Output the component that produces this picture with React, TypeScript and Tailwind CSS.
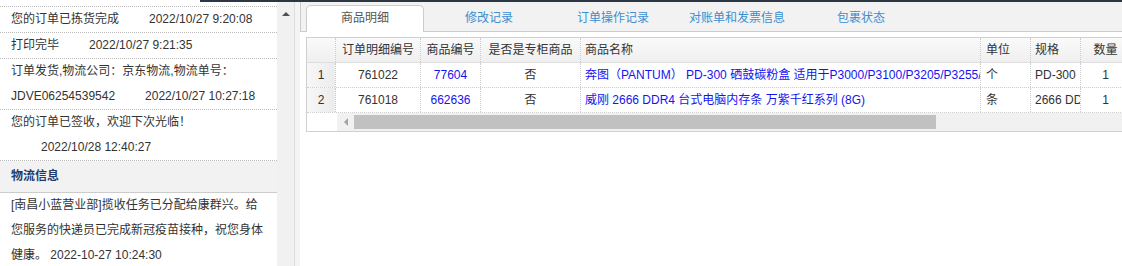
import React from "react";

const font = { fontFamily: '"Liberation Sans", "Noto Sans CJK SC", sans-serif' };

const logs = [
  { text: "您的订单已拣货完成", time: "2022/10/27 9:20:08" },
  { text: "打印完毕", time: "2022/10/27 9:21:35" },
  { text: "订单发货,物流公司：京东物流,物流单号：JDVE06254539542", time: "2022/10/27 10:27:18" },
  { text: "您的订单已签收，欢迎下次光临！", time: "2022/10/28 12:40:27" },
];

const tabs = ["商品明细", "修改记录", "订单操作记录", "对账单和发票信息", "包裹状态"];

const rows = [
  {
    id: "761022",
    sku: "77604",
    name: "奔图（PANTUM） PD-300 硒鼓碳粉盒 适用于P3000/P3100/P3205/P3255/P3500/P3405DN",
    unit: "个",
    spec: "PD-300",
    qty: "1",
  },
  {
    id: "761018",
    sku: "662636",
    name: "威刚 2666 DDR4 台式电脑内存条 万紫千红系列 (8G)",
    unit: "条",
    spec: "2666 DDR4",
    qty: "1",
  },
];

const cols = "grid grid-cols-[29px_85px_60px_100px_400px_50px_50px_50px]";
const cell = "border-r border-dotted border-[#ccc] overflow-hidden whitespace-nowrap";

export default function App() {
  return (
    <div className="w-[1122px] h-[266px] overflow-hidden bg-white text-[12px] text-[#333] flex flex-col" style={font}>
      {/* top band */}
      <div className="flex h-[2px] shrink-0">
        <div className="w-[200px] bg-white" />
        <div className="flex-1 bg-[#2d3744]" />
      </div>

      <div className="flex flex-1 min-h-0">
        {/* Left log panel */}
        <div className="w-[277px] shrink-0 pt-[4px] overflow-hidden">
          <div className="border-t border-dotted border-[#bbb]">
            {logs.map((l, i) => (
              <div key={i} className="pl-[11px] pr-[10px] leading-[25px] border-b border-dotted border-[#bbb]">
                {l.text}
                <span className="ml-[30px]">{l.time}</span>
              </div>
            ))}
          </div>
          <div className="h-[32px] bg-[#f2f2f2] border-b border-[#ccc] pl-[11px] leading-[31px] font-bold text-[#1e3a6e]">
            物流信息
          </div>
          <div className="pl-[11px] pr-[10px] leading-[25px]">
            [南昌小蓝营业部]揽收任务已分配给康群兴。给您服务的快递员已完成新冠疫苗接种，祝您身体健康。 2022-10-27 10:24:30
          </div>
        </div>

        {/* Left scrollbar */}
        <div className="w-[17px] shrink-0 bg-[#f1f1f1] flex justify-center pt-[9px]">
          <svg width="8" height="5" viewBox="0 0 8 5">
            <path d="M0 5 L4 1 L8 5 Z" fill="#505050" />
          </svg>
        </div>
        <div className="w-[6px] shrink-0 bg-[#f4f4f4] border-l border-[#dcdcdc]" />

        {/* Right panel */}
        <div className="flex-1 min-w-0 overflow-hidden">
          <div className="h-[30px] bg-[#f2f2f2] border-l border-b border-[#ccc] pl-[5px] pt-[3px] flex gap-[6px]">
            {tabs.map((t, i) =>
              i === 0 ? (
                <div
                  key={t}
                  className="w-[118px] h-[27px] -mb-px bg-white border border-b-0 border-[#ccc] rounded-t-[5px] text-center leading-[25px] text-[#555]"
                >
                  {t}
                </div>
              ) : (
                <div key={t} className="w-[118px] text-center leading-[27px] text-[#3b8ed0]">
                  {t}
                </div>
              )
            )}
          </div>

          {/* Data grid */}
          <div className="ml-[6px] mt-[5px] w-[900px] border border-[#d0d0d0]">
            <div className={`${cols} h-[25px] leading-[24px] bg-gradient-to-b from-[#fafafa] to-[#efefef] border-b border-[#ddd]`}>
              <div className={cell} />
              <div className={`${cell} text-center`}>订单明细编号</div>
              <div className={`${cell} text-center`}>商品编号</div>
              <div className={`${cell} text-center`}>是否是专柜商品</div>
              <div className={`${cell} px-[4px]`}>商品名称</div>
              <div className={`${cell} px-[5px]`}>单位</div>
              <div className={`${cell} px-[4px]`}>规格</div>
              <div className={`${cell} text-center`}>数量</div>
            </div>
            {rows.map((r, i) => (
              <div key={r.id} className={`${cols} h-[25px] leading-[24px] border-b border-dotted border-[#ccc]`}>
                <div className={`${cell} text-center bg-gradient-to-r from-[#f7f7f7] to-[#ececec]`}>{i + 1}</div>
                <div className={`${cell} text-center`}>{r.id}</div>
                <div className={`${cell} text-center text-[#1414f0]`}>{r.sku}</div>
                <div className={`${cell} text-center`}>否</div>
                <div className={`${cell} px-[4px] text-[#1414f0]`}>{r.name}</div>
                <div className={`${cell} px-[5px]`}>{r.unit}</div>
                <div className={`${cell} px-[4px]`}>{r.spec}</div>
                <div className={`${cell} text-center`}>{r.qty}</div>
              </div>
            ))}
            {/* horizontal scrollbar */}
            <div className="flex h-[18px]">
              <div className="w-[30px] bg-white" />
              <div className="flex-1 bg-[#f1f1f1] flex items-center">
                <div className="w-[17px] h-full flex items-center justify-center">
                  <svg width="5" height="8" viewBox="0 0 5 8">
                    <path d="M5 0 L1 4 L5 8 Z" fill="#a3a3a3" />
                  </svg>
                </div>
                <div className="w-[582px] h-[14px] bg-[#c1c1c1]" />
              </div>
            </div>
          </div>
        </div>
      </div>
    </div>
  );
}
